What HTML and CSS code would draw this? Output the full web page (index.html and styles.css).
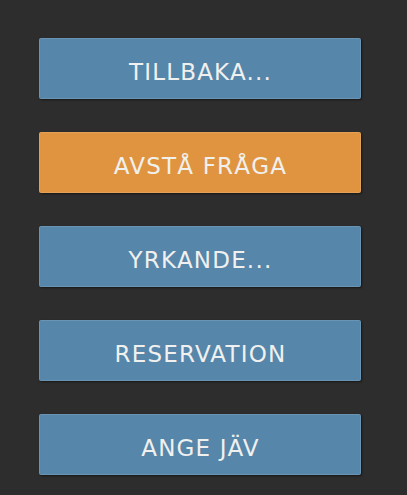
FILE: index.html
```html
<!DOCTYPE html>
<html lang="sv">
<head>
<meta charset="utf-8">
<link rel="stylesheet" href="styles.css">
</head>
<body>
<div class="menu">
  <button class="btn btn-blue">TILLBAKA...</button>
  <button class="btn btn-orange">AVSTÅ FRÅGA</button>
  <button class="btn btn-blue">YRKANDE...</button>
  <button class="btn btn-blue">RESERVATION</button>
  <button class="btn btn-blue">ANGE JÄV</button>
</div>
</body>
</html>
```
FILE: styles.css
```css
html, body {
  margin: 0;
  padding: 0;
  background: #2d2d2d;
  height: 100%;
}
.menu {
  display: flex;
  flex-direction: column;
  gap: 33px;
  padding: 38px 0 0 39px;
}
.btn {
  width: 322px;
  height: 61px;
  margin: 0;
  padding: 7px 0 0 1px;
  border: 1px solid rgba(255,255,255,0.12);
  border-radius: 2px;
  box-shadow: 1px 1px 2px rgba(0,0,0,0.5);
  font-family: "DejaVu Sans", sans-serif;
  font-size: 23px;
  font-weight: 400;
  letter-spacing: 1.2px;
  color: #f0f0ee;
  text-align: center;
  cursor: pointer;
}
.btn-blue {
  background: #5686aa;
}
.btn-orange {
  background: #e0943f;
}
```
